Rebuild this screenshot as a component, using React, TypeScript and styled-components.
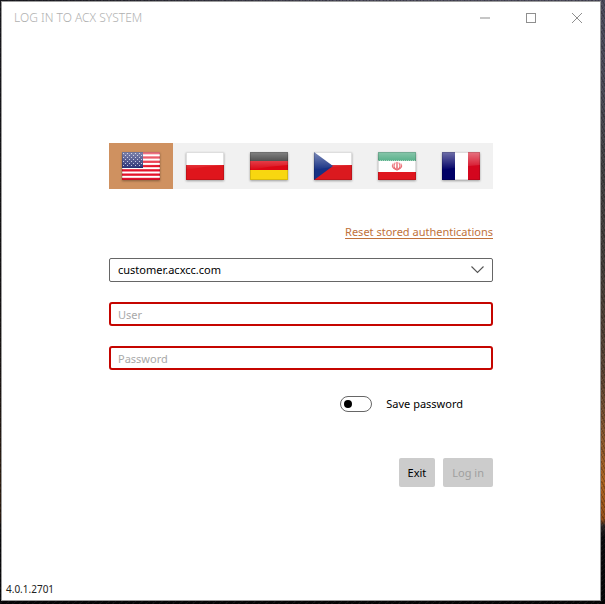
import React, { useState } from "react";
import styled, { createGlobalStyle } from "styled-components";

const GlobalStyle = createGlobalStyle`
  *, *::before, *::after { box-sizing: border-box; }
  body { margin: 0; background: #08070a; }
  button, input, select { font: inherit; color: inherit; }
`;

const Desktop = styled.div`
  display: flex;
  min-height: 100vh;
  padding: 1px 4px 3px 1px;
  font: 11px/16px "Noto Sans", "Open Sans", sans-serif;
  color: #000;
  background:
    repeating-linear-gradient(63deg, rgba(0, 0, 0, 0.22) 0 1px, transparent 1px 3px),
    repeating-linear-gradient(-37deg, rgba(255, 255, 255, 0.05) 0 1px, transparent 1px 4px),
    linear-gradient(90deg, rgba(5, 5, 8, 0.75) 0 2px, transparent 60%),
    linear-gradient(#4c4b5c 0%, #4b4a57 14%, #413f41 28%, #433c38 44%, #5a4232 62%,
      #85552e 72%, #a9611f 80%, #8f4b16 86%, #2b2524 87%, #0a090c 89%, #050506 100%);
`;

const Window = styled.div`
  flex: 1;
  display: flex;
  flex-direction: column;
  background: #fff;
  border: 1px solid #9b9b9b;
`;

const TitleBar = styled.header`
  display: flex;
  align-items: center;
  justify-content: space-between;
  height: 32px;
  padding-left: 12px;
`;

const Title = styled.h1`
  margin: 0;
  font-size: 12px;
  line-height: 16px;
  font-weight: 300;
  color: #b0b0b0;
`;

const WindowControls = styled.div`
  display: flex;
  height: 100%;
`;

const ControlButton = styled.button`
  display: grid;
  place-items: center;
  width: 46px;
  height: 100%;
  padding: 0;
  border: 0;
  background: none;
  color: #8f8f8f;
`;

const Form = styled.form`
  display: flex;
  flex-direction: column;
  width: 64%;
  min-width: 384px;
  margin: 109px auto 0;
  flex: 1;
`;

const LanguageBar = styled.div`
  display: grid;
  grid-template-columns: repeat(6, 1fr);
  height: 46px;
  background: #f1f1f1;
`;

const LanguageButton = styled.button<{ $active: boolean }>`
  display: grid;
  place-items: center;
  padding: 0;
  border: 0;
  background: ${(p) => (p.$active ? "#cf9160" : "transparent")};
`;

const FlagImage = styled.svg`
  display: block;
  filter: drop-shadow(0 1px 1px rgba(0, 0, 0, 0.35));
`;

const ResetLink = styled.a`
  align-self: flex-end;
  margin: 35px 0 18px;
  color: #c0713a;
  text-decoration: underline;
  text-underline-offset: 2px;
`;

const Fields = styled.div`
  display: flex;
  flex-direction: column;
  gap: 20px;
`;

const SelectBox = styled.div`
  display: grid;
  align-items: center;
  > * { grid-area: 1 / 1; }
  > svg {
    justify-self: end;
    margin-right: 9px;
    pointer-events: none;
  }
`;

const Select = styled.select`
  appearance: none;
  width: 100%;
  height: 24px;
  padding: 0 8px;
  border: 1px solid #666;
  border-radius: 2px;
  background: #fff;
`;

const TextInput = styled.input`
  width: 100%;
  height: 24px;
  padding: 0 7px;
  border: 2px solid #c50500;
  border-radius: 3px;
  background: #fff;
  outline: none;
  &::placeholder { color: #a9a9a9; opacity: 1; }
`;

const SwitchLabel = styled.label`
  display: flex;
  align-items: center;
  align-self: flex-end;
  gap: 14px;
  margin: 26px 30px 0 0;
`;

const Switch = styled.input`
  appearance: none;
  display: flex;
  align-items: center;
  width: 32px;
  height: 16px;
  margin: 0;
  padding: 0 3px;
  border: 1px solid #666;
  border-radius: 8px;
  &::before {
    content: "";
    width: 8px;
    height: 8px;
    border-radius: 50%;
    background: #000;
  }
  &:checked { justify-content: flex-end; }
`;

const Actions = styled.div`
  display: flex;
  justify-content: flex-end;
  gap: 8px;
  margin-top: 46px;
`;

const ActionButton = styled.button`
  height: 29px;
  padding: 0 9px;
  border: 0;
  border-radius: 2px;
  background: #ccc;
  &:disabled { color: #9f9f9f; }
`;

const Version = styled.footer`
  padding: 0 4px 3px;
  font-size: 10px;
  line-height: 16px;
  color: #222;
`;

type FlagCode = "us" | "pl" | "de" | "cz" | "ir" | "fr";

const languages: { code: FlagCode; name: string }[] = [
  { code: "us", name: "English" },
  { code: "pl", name: "Polski" },
  { code: "de", name: "Deutsch" },
  { code: "cz", name: "Čeština" },
  { code: "ir", name: "فارسی" },
  { code: "fr", name: "Français" },
];

const stripeRows = [0, 1, 2, 3, 4, 5, 6];
const starRows = [0, 1, 2, 3, 4, 5, 6];
const starColumns = [0, 1, 2, 3, 4];

const flagArt: Record<FlagCode, React.ReactNode> = {
  us: (
    <>
      <rect width="38" height="28" fill="#fff" />
      {stripeRows.map((i) => (
        <rect key={i} y={i * 4.3} width="38" height="2.3" fill="#e4132a" />
      ))}
      <rect width="21" height="16" fill="#222a70" />
      {starRows.map((r) =>
        starColumns.map((c) => (
          <rect key={`${r}-${c}`} x={1 + c * 4 + (r % 2) * 2} y={1 + r * 2} width="1" height="1" fill="#b9bddb" />
        )),
      )}
    </>
  ),
  pl: (
    <>
      <rect width="38" height="14" fill="#fff" />
      <rect y="13" width="38" height="15" fill="#df151c" />
    </>
  ),
  de: (
    <>
      <rect width="38" height="10" fill="#222" />
      <rect y="9" width="38" height="10" fill="#dc0714" />
      <rect y="18" width="38" height="10" fill="#f8d710" />
    </>
  ),
  cz: (
    <>
      <rect width="38" height="14" fill="#fff" />
      <rect y="13" width="38" height="15" fill="#db191f" />
      <path d="M0 0 19 14 0 28z" fill="#173184" />
    </>
  ),
  ir: (
    <>
      <rect width="38" height="28" fill="#fff" />
      <rect width="38" height="9" fill="#2c9b6a" />
      <rect y="20" width="38" height="8" fill="#df161e" />
      <path d="M0 8.5h38M0 19.5h38" stroke="#fff" strokeDasharray="1 1" opacity=".45" />
      <g fill="none" stroke="#ea6d74" strokeLinecap="round">
        <path d="M19 10.500v7.500" strokeWidth="1.600" />
        <path d="M17 11c-1.500 2.500-1 5 1 6.500M21 11c1.500 2.500 1 5-1 6.500" strokeWidth="1.200" />
        <path d="M15 12c-1.500 2.500 0 4.500 3 5.500M23 12c1.500 2.500 0 4.500-3 5.500" strokeWidth="1.200" />
      </g>
    </>
  ),
  fr: (
    <>
      <rect width="38" height="28" fill="#fff" />
      <rect width="13" height="28" fill="#000066" />
      <rect x="26" width="12" height="28" fill="#d4061e" />
    </>
  ),
};

function Flag({ code }: { code: FlagCode }) {
  const glossId = `gloss-${code}`;
  return (
    <FlagImage width="38" height="28" viewBox="0 0 38 28" aria-hidden="true">
      <defs>
        <linearGradient id={glossId} x1="0" y1="0" x2="0" y2="1">
          <stop offset="0" stopColor="#fff" stopOpacity=".44" />
          <stop offset="1" stopColor="#fff" stopOpacity="0" />
        </linearGradient>
      </defs>
      {flagArt[code]}
      <path d="M0 0h38v13Q19 14 0 18z" fill={`url(#${glossId})`} />
      <rect x=".5" y=".5" width="37" height="27" fill="none" stroke="#000" opacity=".13" />
    </FlagImage>
  );
}

export default function App() {
  const [language, setLanguage] = useState<FlagCode>("us");
  const [user, setUser] = useState("");
  const [password, setPassword] = useState("");

  return (
    <>
      <GlobalStyle />
      <Desktop>
        <Window>
          <TitleBar>
            <Title>LOG IN TO ACX SYSTEM</Title>
            <WindowControls>
              <ControlButton type="button" aria-label="Minimize">
                <svg width="10" height="10" viewBox="0 0 10 10">
                  <path d="M0 5h10" stroke="#c6c6c6" strokeWidth="2" />
                </svg>
              </ControlButton>
              <ControlButton type="button" aria-label="Maximize">
                <svg width="10" height="10" viewBox="0 0 10 10">
                  <rect x=".5" y=".5" width="9" height="9" fill="none" stroke="currentColor" />
                </svg>
              </ControlButton>
              <ControlButton type="button" aria-label="Close">
                <svg width="10" height="10" viewBox="0 0 10 10">
                  <path d="m0 0 10 10M10 0 0 10" stroke="currentColor" />
                </svg>
              </ControlButton>
            </WindowControls>
          </TitleBar>
          <Form onSubmit={(e) => e.preventDefault()}>
            <LanguageBar role="group" aria-label="Language">
              {languages.map(({ code, name }) => (
                <LanguageButton
                  key={code}
                  type="button"
                  aria-label={name}
                  aria-pressed={language === code}
                  $active={language === code}
                  onClick={() => setLanguage(code)}
                >
                  <Flag code={code} />
                </LanguageButton>
              ))}
            </LanguageBar>
            <ResetLink href="#reset">Reset stored authentications</ResetLink>
            <Fields>
              <SelectBox>
                <Select aria-label="Server">
                  <option>customer.acxcc.com</option>
                </Select>
                <svg width="13" height="8" viewBox="0 0 13 8" aria-hidden="true">
                  <path d="m.5 .5 6 6 6-6" fill="none" stroke="#555" strokeWidth="1.100" />
                </svg>
              </SelectBox>
              <TextInput
                aria-label="User"
                placeholder="User"
                value={user}
                onChange={(e) => setUser(e.target.value)}
              />
              <TextInput
                type="password"
                aria-label="Password"
                placeholder="Password"
                value={password}
                onChange={(e) => setPassword(e.target.value)}
              />
            </Fields>
            <SwitchLabel>
              <Switch type="checkbox" role="switch" />
              Save password
            </SwitchLabel>
            <Actions>
              <ActionButton type="button">Exit</ActionButton>
              <ActionButton type="submit" disabled={!user || !password}>
                Log in
              </ActionButton>
            </Actions>
          </Form>
          <Version>4.0.1.2701</Version>
        </Window>
      </Desktop>
    </>
  );
}
